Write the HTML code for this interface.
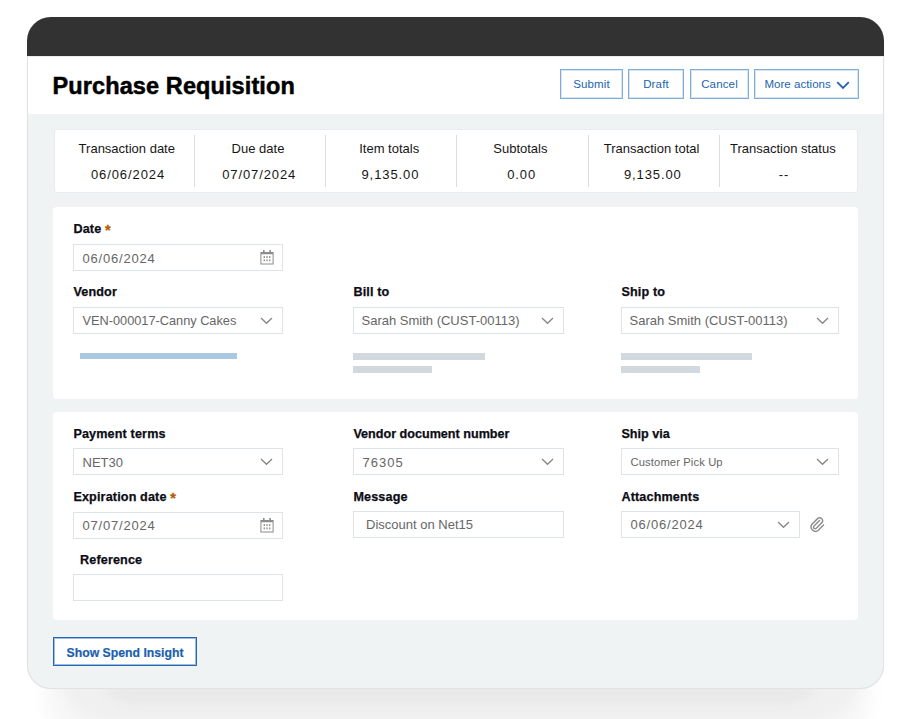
<!DOCTYPE html>
<html><head><meta charset="utf-8">
<style>
*{box-sizing:border-box;margin:0;padding:0}
html,body{width:909px;height:719px;background:#fff;overflow:hidden;font-family:"Liberation Sans",sans-serif}
.t{position:absolute;line-height:1;white-space:nowrap}
.b{position:absolute}
svg{display:block}
.req{color:#b55d00;-webkit-text-stroke:0.3px #b55d00;font-size:14.5px;line-height:0;position:relative;top:1.5px}
.inp{position:absolute;border:1px solid #dde3e7;background:#fff}
.hb{position:absolute;border:1px solid #80acd6;box-shadow:inset 0 0 0 1px #d6e5f3;background:#fff}
</style></head><body>
<div class="b" style="left:0;top:676px;width:909px;height:43px;overflow:hidden;-webkit-mask-image:linear-gradient(to bottom,transparent 0,#000 16px);mask-image:linear-gradient(to bottom,transparent 0,#000 16px)"><div class="b" style="left:44px;top:-76px;width:828px;height:160px;border-radius:70px;background:#f7f7f7;filter:blur(8px)"></div>
<div class="b" style="left:60px;top:-76px;width:800px;height:125px;border-radius:50px;background:#f0f0f0;filter:blur(6px)"></div>
<div class="b" style="left:98px;top:-76px;width:724px;height:104px;border-radius:34px;background:#e9e9e9;filter:blur(4px)"></div>
</div>
<div class="b" style="left:27px;top:17px;width:857px;height:672px;border-radius:24px;background:#f0f3f4;box-shadow:inset 0 0 0 1px #e0e3e5,0 0 1px rgba(0,0,0,0.14);overflow:hidden"><div class="b" style="left:0;top:0;right:0;height:39px;background:#323232"></div><div class="b" style="left:1px;top:39px;right:1px;height:58px;background:#fff;border-top:1px solid #e8ecef"></div></div>
<div class="t" style="left:52.6px;top:75px;font-size:23.5px;font-weight:bold;color:#000;letter-spacing:0.1px;-webkit-text-stroke:0.5px #000">Purchase Requisition</div>
<div class="hb" style="left:560px;top:69px;width:63px;height:29.5px;"></div>
<div class="t" style="left:491.50px;width:200px;text-align:center;top:79.00px;font-size:11.5px;color:#2264ad;letter-spacing:0.15px">Submit</div>
<div class="hb" style="left:628px;top:69px;width:56px;height:29.5px;"></div>
<div class="t" style="left:556.00px;width:200px;text-align:center;top:79.00px;font-size:11.5px;color:#2264ad;letter-spacing:0.15px">Draft</div>
<div class="hb" style="left:690px;top:69px;width:59px;height:29.5px;"></div>
<div class="t" style="left:619.50px;width:200px;text-align:center;top:79.00px;font-size:11.5px;color:#2264ad;letter-spacing:0.15px">Cancel</div>
<div class="hb" style="left:754px;top:69px;width:105px;height:29.5px;"></div>
<div class="t" style="left:764.40px;top:79.00px;font-size:11.5px;color:#2264ad;letter-spacing:0.05px">More actions</div>
<svg class="b" style="left:836px;top:80.5px" width="14" height="9" viewBox="0 0 14 9"><path d="M1.2 1.2 L7 7 L12.8 1.2" fill="none" stroke="#2264ad" stroke-width="1.8"/></svg>
<div class="b" style="left:54px;top:129px;width:804px;height:64px;background:#fff;border:1px solid #e8ebee;border-radius:3px"></div>
<div class="t" style="left:26.80px;width:200px;text-align:center;top:142.00px;font-size:13px;color:#161616">Transaction date</div>
<div class="t" style="left:28.00px;width:200px;text-align:center;top:168.00px;font-size:13px;color:#161616;letter-spacing:0.9px">06/06/2024</div>
<div class="b" style="left:194.2px;top:135px;width:1px;height:52px;background:#d9dde0"></div>
<div class="t" style="left:158.00px;width:200px;text-align:center;top:142.00px;font-size:13px;color:#161616">Due date</div>
<div class="t" style="left:159.20px;width:200px;text-align:center;top:168.00px;font-size:13px;color:#161616;letter-spacing:0.9px">07/07/2024</div>
<div class="b" style="left:325.3px;top:135px;width:1px;height:52px;background:#d9dde0"></div>
<div class="t" style="left:289.20px;width:200px;text-align:center;top:142.00px;font-size:13px;color:#161616">Item totals</div>
<div class="t" style="left:290.40px;width:200px;text-align:center;top:168.00px;font-size:13px;color:#161616;letter-spacing:0.9px">9,135.00</div>
<div class="b" style="left:456.4px;top:135px;width:1px;height:52px;background:#d9dde0"></div>
<div class="t" style="left:420.40px;width:200px;text-align:center;top:142.00px;font-size:13px;color:#161616">Subtotals</div>
<div class="t" style="left:421.60px;width:200px;text-align:center;top:168.00px;font-size:13px;color:#161616;letter-spacing:0.9px">0.00</div>
<div class="b" style="left:587.5px;top:135px;width:1px;height:52px;background:#d9dde0"></div>
<div class="t" style="left:551.60px;width:200px;text-align:center;top:142.00px;font-size:13px;color:#161616">Transaction total</div>
<div class="t" style="left:552.80px;width:200px;text-align:center;top:168.00px;font-size:13px;color:#161616;letter-spacing:0.9px">9,135.00</div>
<div class="b" style="left:718.6px;top:135px;width:1px;height:52px;background:#d9dde0"></div>
<div class="t" style="left:682.80px;width:200px;text-align:center;top:142.00px;font-size:13px;color:#161616">Transaction status</div>
<div class="t" style="left:684.00px;width:200px;text-align:center;top:168.00px;font-size:13px;color:#161616;letter-spacing:0.9px">--</div>
<div class="b" style="left:53px;top:207px;width:805px;height:192px;background:#fff;border-radius:4px"></div>
<div class="b" style="left:53px;top:412px;width:805px;height:208px;background:#fff;border-radius:4px"></div>
<div class="t" style="left:73.40px;top:223.00px;font-size:12.6px;font-weight:bold;color:#0c0c14;-webkit-text-stroke:0.25px #0c0c14;letter-spacing:0.15px">Date <span class="req">*</span></div>
<div class="inp" style="left:73px;top:244px;width:210px;height:27px;"><div class="b" style="right:8px;top:5px"><svg width="14" height="15" viewBox="0 0 14 15"><g fill="#8c8c8c">
<rect x="3" y="0" width="1.6" height="2.6"/><rect x="9.4" y="0" width="1.6" height="2.6"/>
<path d="M0.4 1.9 H13.6 V14.5 H0.4 Z M1.4 4.3 V13.5 H12.6 V4.3 Z" fill-rule="evenodd"/>
<rect x="3.6" y="6.1" width="1.3" height="1.9"/><rect x="6.35" y="6.1" width="1.3" height="1.9"/><rect x="9.1" y="6.1" width="1.3" height="1.9"/>
<rect x="3.6" y="9.4" width="1.3" height="1.9"/><rect x="6.35" y="9.4" width="1.3" height="1.9"/><rect x="9.1" y="9.4" width="1.3" height="1.9"/>
</g></svg></div></div>
<div class="t" style="left:82.50px;top:252.00px;font-size:13px;color:#666;letter-spacing:0.8px">06/06/2024</div>
<div class="t" style="left:73.40px;top:286.00px;font-size:12.6px;font-weight:bold;color:#0c0c14;-webkit-text-stroke:0.25px #0c0c14;letter-spacing:0.15px">Vendor</div>
<div class="inp" style="left:73px;top:307px;width:210px;height:27px;"><div class="b" style="right:9px;top:9px"><svg width="13" height="8" viewBox="0 0 13 8"><path d="M1 1 L6.5 6.3 L12 1" fill="none" stroke="#858585" stroke-width="1.25"/></svg></div></div>
<div class="t" style="left:82.50px;top:315.00px;font-size:12.75px;color:#666;letter-spacing:0">VEN-000017-Canny Cakes</div>
<div class="t" style="left:353.40px;top:286.00px;font-size:12.6px;font-weight:bold;color:#0c0c14;-webkit-text-stroke:0.25px #0c0c14;letter-spacing:0.15px">Bill to</div>
<div class="inp" style="left:353px;top:307px;width:211px;height:27px;"><div class="b" style="right:9px;top:9px"><svg width="13" height="8" viewBox="0 0 13 8"><path d="M1 1 L6.5 6.3 L12 1" fill="none" stroke="#858585" stroke-width="1.25"/></svg></div></div>
<div class="t" style="left:361.50px;top:314.00px;font-size:13px;color:#666;letter-spacing:0">Sarah Smith (CUST-00113)</div>
<div class="t" style="left:621.40px;top:286.00px;font-size:12.6px;font-weight:bold;color:#0c0c14;-webkit-text-stroke:0.25px #0c0c14;letter-spacing:0.15px">Ship to</div>
<div class="inp" style="left:621px;top:307px;width:218px;height:27px;"><div class="b" style="right:9px;top:9px"><svg width="13" height="8" viewBox="0 0 13 8"><path d="M1 1 L6.5 6.3 L12 1" fill="none" stroke="#858585" stroke-width="1.25"/></svg></div></div>
<div class="t" style="left:629.50px;top:314.00px;font-size:13px;color:#666;letter-spacing:0">Sarah Smith (CUST-00113)</div>
<div class="b" style="left:79.5px;top:353px;width:157.5px;height:6px;background:#aac8e0"></div>
<div class="b" style="left:353px;top:353px;width:132px;height:6.5px;background:#d2d9de"></div>
<div class="b" style="left:353px;top:366px;width:79px;height:6.5px;background:#d2d9de"></div>
<div class="b" style="left:621px;top:353px;width:131px;height:6.5px;background:#d2d9de"></div>
<div class="b" style="left:621px;top:366px;width:79px;height:6.5px;background:#d2d9de"></div>
<div class="t" style="left:73.40px;top:428.00px;font-size:12.6px;font-weight:bold;color:#0c0c14;-webkit-text-stroke:0.25px #0c0c14;letter-spacing:0.15px">Payment terms</div>
<div class="inp" style="left:73px;top:448px;width:210px;height:27px;"><div class="b" style="right:9px;top:9px"><svg width="13" height="8" viewBox="0 0 13 8"><path d="M1 1 L6.5 6.3 L12 1" fill="none" stroke="#858585" stroke-width="1.25"/></svg></div></div>
<div class="t" style="left:82.50px;top:456.00px;font-size:13px;color:#666;letter-spacing:0">NET30</div>
<div class="t" style="left:73.40px;top:491.00px;font-size:12.6px;font-weight:bold;color:#0c0c14;-webkit-text-stroke:0.25px #0c0c14;letter-spacing:0.15px">Expiration date <span class="req">*</span></div>
<div class="inp" style="left:73px;top:512px;width:210px;height:27px;"><div class="b" style="right:8px;top:5px"><svg width="14" height="15" viewBox="0 0 14 15"><g fill="#8c8c8c">
<rect x="3" y="0" width="1.6" height="2.6"/><rect x="9.4" y="0" width="1.6" height="2.6"/>
<path d="M0.4 1.9 H13.6 V14.5 H0.4 Z M1.4 4.3 V13.5 H12.6 V4.3 Z" fill-rule="evenodd"/>
<rect x="3.6" y="6.1" width="1.3" height="1.9"/><rect x="6.35" y="6.1" width="1.3" height="1.9"/><rect x="9.1" y="6.1" width="1.3" height="1.9"/>
<rect x="3.6" y="9.4" width="1.3" height="1.9"/><rect x="6.35" y="9.4" width="1.3" height="1.9"/><rect x="9.1" y="9.4" width="1.3" height="1.9"/>
</g></svg></div></div>
<div class="t" style="left:82.50px;top:519.00px;font-size:13px;color:#666;letter-spacing:0.8px">07/07/2024</div>
<div class="t" style="left:80.00px;top:554.00px;font-size:12.6px;font-weight:bold;color:#0c0c14;-webkit-text-stroke:0.25px #0c0c14;letter-spacing:0.15px">Reference</div>
<div class="inp" style="left:73px;top:574px;width:210px;height:27px;"></div>
<div class="t" style="left:353.40px;top:428.00px;font-size:12.6px;font-weight:bold;color:#0c0c14;-webkit-text-stroke:0.25px #0c0c14;letter-spacing:0px">Vendor document number</div>
<div class="inp" style="left:353px;top:448px;width:211px;height:27px;"><div class="b" style="right:9px;top:9px"><svg width="13" height="8" viewBox="0 0 13 8"><path d="M1 1 L6.5 6.3 L12 1" fill="none" stroke="#858585" stroke-width="1.25"/></svg></div></div>
<div class="t" style="left:362.50px;top:456.00px;font-size:13px;color:#666;letter-spacing:1px">76305</div>
<div class="t" style="left:353.40px;top:491.00px;font-size:12.6px;font-weight:bold;color:#0c0c14;-webkit-text-stroke:0.25px #0c0c14;letter-spacing:0.15px">Message</div>
<div class="inp" style="left:353px;top:511px;width:211px;height:27px;"></div>
<div class="t" style="left:366.00px;top:518.00px;font-size:13px;color:#666;letter-spacing:0">Discount on Net15</div>
<div class="t" style="left:621.40px;top:428.00px;font-size:12.6px;font-weight:bold;color:#0c0c14;-webkit-text-stroke:0.25px #0c0c14;letter-spacing:0px">Ship via</div>
<div class="inp" style="left:621px;top:448px;width:218px;height:27px;"><div class="b" style="right:9px;top:9px"><svg width="13" height="8" viewBox="0 0 13 8"><path d="M1 1 L6.5 6.3 L12 1" fill="none" stroke="#858585" stroke-width="1.25"/></svg></div></div>
<div class="t" style="left:630.50px;top:457.00px;font-size:11.2px;color:#666;letter-spacing:0.13px">Customer Pick Up</div>
<div class="t" style="left:621.40px;top:491.00px;font-size:12.6px;font-weight:bold;color:#0c0c14;-webkit-text-stroke:0.25px #0c0c14;letter-spacing:0.15px">Attachments</div>
<div class="inp" style="left:621px;top:511px;width:179px;height:27px;"><div class="b" style="right:9px;top:9px"><svg width="13" height="8" viewBox="0 0 13 8"><path d="M1 1 L6.5 6.3 L12 1" fill="none" stroke="#858585" stroke-width="1.25"/></svg></div></div>
<div class="t" style="left:630.50px;top:518.00px;font-size:13px;color:#666;letter-spacing:0.8px">06/06/2024</div>
<div class="b" style="left:810px;top:515.7px"><svg width="16" height="18" viewBox="0 0 16 18"><path d="M9.5 4.5 L4 10 a1.6 1.6 0 0 0 2.3 2.3 L12 6.6 a3 3 0 0 0 -4.2 -4.2 L2.2 8 a4.4 4.4 0 0 0 6.2 6.2 L13.5 9" fill="none" stroke="#8c8c8c" stroke-width="1.4" stroke-linecap="round"/></svg></div>
<div class="b" style="left:53px;top:637px;width:144px;height:29px;border:1px solid #2569b5;box-shadow:inset 0 0 0 1px rgba(37,105,181,0.45);background:#fff"></div>
<div class="t" style="left:66.50px;top:647.00px;font-size:12.25px;font-weight:bold;color:#1b5faf;-webkit-text-stroke:0.2px #1b5faf">Show Spend Insight</div>
</body></html>
